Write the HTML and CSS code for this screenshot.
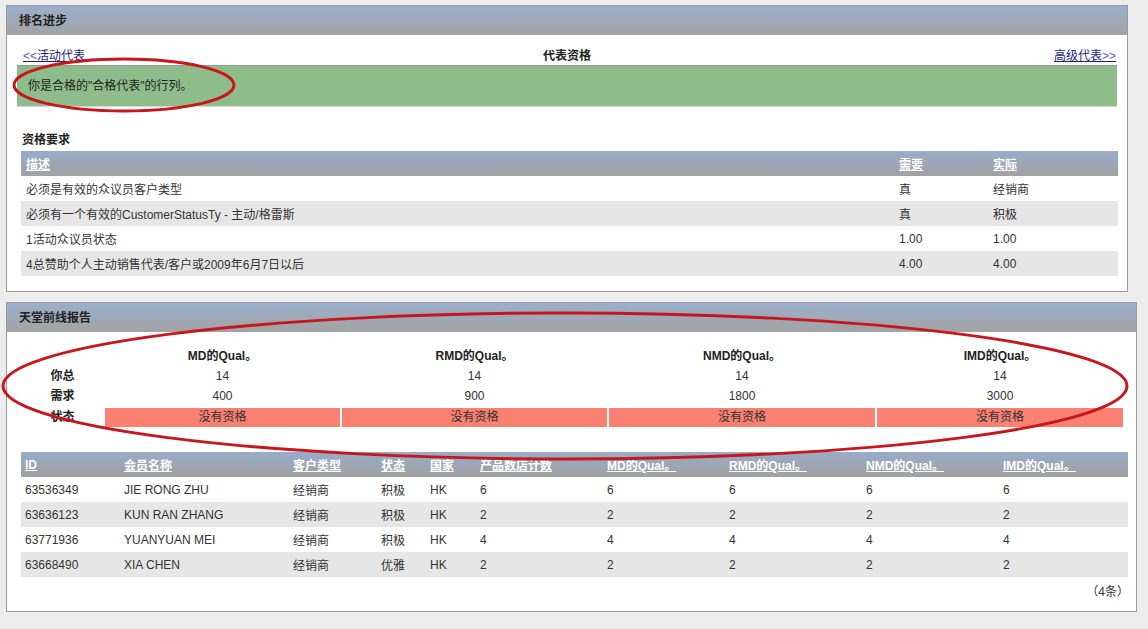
FILE: index.html
```html
<!DOCTYPE html>
<html lang="zh-CN">
<head>
<meta charset="utf-8">
<title>排名进步</title>
<link rel="stylesheet" href="styles.css">
</head>
<body>
<div class="page">
  <section class="panel panel-rank">
    <div class="panel-head">排名进步</div>
    <div class="panel-body body-rank">
      <div class="nav-row">
        <a class="nav-prev" href="#"><span class="arr">&lt;&lt;</span>活动代表</a>
        <span class="nav-title">代表资格</span>
        <a class="nav-next" href="#">高级代表<span class="arr">&gt;&gt;</span></a>
      </div>
      <div class="notice">你是合格的"合格代表"的行列。</div>
      <h3 class="sub-title">资格要求</h3>
      <table class="grid req">
        <colgroup><col class="c-desc"><col class="c-need"><col></colgroup>
        <thead>
          <tr><th><a href="#">描述</a></th><th><a href="#">需要</a></th><th><a href="#">实际</a></th></tr>
        </thead>
        <tbody>
          <tr><td>必须是有效的众议员客户类型</td><td>真</td><td>经销商</td></tr>
          <tr class="alt"><td>必须有一个有效的CustomerStatusTy - 主动/格雷斯</td><td>真</td><td>积极</td></tr>
          <tr><td>1活动众议员状态</td><td>1.00</td><td>1.00</td></tr>
          <tr class="alt"><td>4总赞助个人主动销售代表/客户或2009年6月7日以后</td><td>4.00</td><td>4.00</td></tr>
        </tbody>
      </table>
    </div>
  </section>

  <section class="panel panel-report">
    <div class="panel-head">天堂前线报告</div>
    <div class="panel-body body-report">
      <div class="summary">
        <div class="s-label"></div>
        <div class="s-head">MD的Qual。</div>
        <div class="s-head">RMD的Qual。</div>
        <div class="s-head">NMD的Qual。</div>
        <div class="s-head">IMD的Qual。</div>

        <div class="s-label">你总</div>
        <div class="s-val">14</div>
        <div class="s-val">14</div>
        <div class="s-val">14</div>
        <div class="s-val">14</div>

        <div class="s-label">需求</div>
        <div class="s-val">400</div>
        <div class="s-val">900</div>
        <div class="s-val">1800</div>
        <div class="s-val">3000</div>

        <div class="s-label s-last">状态</div>
        <div class="s-bad">没有资格</div>
        <div class="s-bad">没有资格</div>
        <div class="s-bad">没有资格</div>
        <div class="s-bad">没有资格</div>
      </div>

      <table class="grid members">
        <colgroup>
          <col class="m-id"><col class="m-name"><col class="m-type"><col class="m-state"><col class="m-country">
          <col class="m-count"><col class="m-md"><col class="m-rmd"><col class="m-nmd"><col>
        </colgroup>
        <thead>
          <tr>
            <th><a href="#">ID</a></th>
            <th><a href="#">会员名称</a></th>
            <th><a href="#">客户类型</a></th>
            <th><a href="#">状态</a></th>
            <th><a href="#">国家</a></th>
            <th><a href="#">产品数店计数</a></th>
            <th><a href="#">MD的Qual。</a></th>
            <th><a href="#">RMD的Qual。</a></th>
            <th><a href="#">NMD的Qual。</a></th>
            <th><a href="#">IMD的Qual。</a></th>
          </tr>
        </thead>
        <tbody>
          <tr><td>63536349</td><td>JIE RONG ZHU</td><td>经销商</td><td>积极</td><td>HK</td><td>6</td><td>6</td><td>6</td><td>6</td><td>6</td></tr>
          <tr class="alt"><td>63636123</td><td>KUN RAN ZHANG</td><td>经销商</td><td>积极</td><td>HK</td><td>2</td><td>2</td><td>2</td><td>2</td><td>2</td></tr>
          <tr><td>63771936</td><td>YUANYUAN MEI</td><td>经销商</td><td>积极</td><td>HK</td><td>4</td><td>4</td><td>4</td><td>4</td><td>4</td></tr>
          <tr class="alt"><td>63668490</td><td>XIA CHEN</td><td>经销商</td><td>优雅</td><td>HK</td><td>2</td><td>2</td><td>2</td><td>2</td><td>2</td></tr>
        </tbody>
      </table>
      <div class="count">（4条）</div>
    </div>
  </section>
</div>

<svg class="annotations" width="1148" height="629" viewBox="0 0 1148 629" aria-hidden="true">
  <ellipse cx="124" cy="85" rx="110" ry="26" fill="none" stroke="#c8161d" stroke-width="3"/>
  <ellipse cx="565" cy="386" rx="562" ry="73" fill="none" stroke="#c8161d" stroke-width="3"/>
</svg>
</body>
</html>
```

FILE: styles.css
```css
* { box-sizing: border-box; }

html, body {
  margin: 0;
  padding: 0;
}

body {
  position: relative;
  width: 1148px;
  height: 629px;
  overflow: hidden;
  background: #ececec;
  font-family: "Liberation Sans", Arial, "Noto Sans CJK SC", sans-serif;
  font-size: 12px;
  color: #333;
}

.page {
  padding: 5px 0 0 6px;
}

.panel {
  background: #fff;
  border: 1px solid #9a9a9a;
}

.panel-rank { width: 1122px; }

.panel-report {
  width: 1131px;
  margin-top: 10px;
}

.panel-head {
  height: 29px;
  line-height: 30px;
  padding-left: 12px;
  font-weight: bold;
  color: #222;
  background: linear-gradient(#9bafcc, #a3a3a3);
}

/* ---- panel 1 ---- */
.body-rank {
  padding: 0 10px 15px;
}

.nav-row {
  display: grid;
  grid-template-columns: 1fr auto 1fr;
  padding: 13px 0 1px;
  line-height: 16px;
  border-bottom: 1px solid #999;
}

.nav-row a {
  color: #1c1c78;
  text-decoration: underline;
}

.nav-row .arr { color: #5a5ab8; }

.nav-prev { padding-left: 6px; justify-self: start; }
.nav-next { justify-self: end; padding-right: 1px; }

.nav-title {
  font-weight: bold;
  color: #222;
}

.notice {
  height: 41px;
  line-height: 41px;
  padding-left: 11px;
  background: #8fbc8b;
  border-bottom: 1px solid #d6d6d6;
  color: #222;
}

.sub-title {
  margin: 25px 0 3px 5px;
  font-size: 12px;
  line-height: 16px;
  font-weight: bold;
  color: #222;
}

/* ---- tables ---- */
.grid {
  border-collapse: collapse;
  border-spacing: 0;
  table-layout: fixed;
}

.grid th,
.grid td {
  height: 25px;
  padding: 0 0 0 5px;
  text-align: left;
  vertical-align: middle;
  white-space: nowrap;
  overflow: hidden;
}

.grid th {
  background: linear-gradient(#98acc9, #a1a1a1);
  font-weight: bold;
}

.grid th a {
  color: #fff;
  text-decoration: underline;
}

.grid td { color: #333; }

.grid tr.alt td { background: #e6e6e6; }

.req {
  margin-left: 4px;
  width: 1097px;
}

.req .c-desc { width: 873px; }
.req .c-need { width: 94px; }

/* ---- panel 2 ---- */
.body-report {
  padding: 0 7px 11px 15px;
}

.summary {
  display: grid;
  grid-template-columns: 81px 235px 265px 266px 246px;
  grid-auto-rows: 20px;
  column-gap: 2px;
  margin-top: 14px;
  line-height: 20px;
  text-align: center;
}

.s-label,
.s-head {
  font-weight: bold;
  color: #222;
}

.s-val { color: #333; }

.s-last,
.s-bad {
  margin-top: 2px;
  height: 19px;
  line-height: 19px;
}

.s-bad {
  background: #fa8072;
  color: #333;
}

.members {
  margin: 26px 0 0 -1px;
  width: 1107px;
}

.members th,
.members td { padding-left: 4px; }

.members .m-id { width: 99px; }
.members .m-name { width: 169px; }
.members .m-type { width: 88px; }
.members .m-state { width: 49px; }
.members .m-country { width: 50px; }
.members .m-count { width: 127px; }
.members .m-md { width: 122px; }
.members .m-rmd { width: 137px; }
.members .m-nmd { width: 137px; }

.count {
  margin-top: 7px;
  line-height: 16px;
  text-align: right;
  color: #333;
}

/* ---- hand-drawn annotation marks over the page ---- */
.annotations {
  position: absolute;
  top: 0;
  left: 0;
  pointer-events: none;
}
```
